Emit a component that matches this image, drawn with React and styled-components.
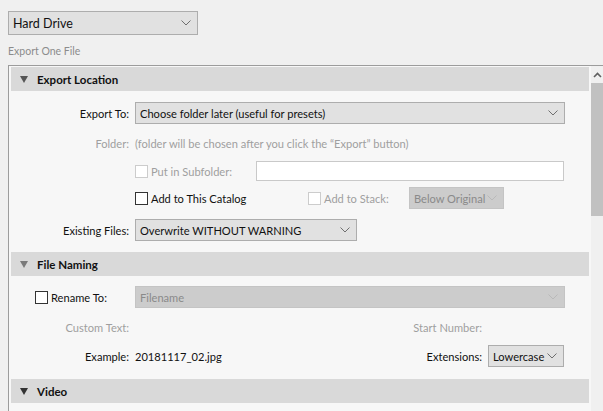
import React from 'react'
import styled, { createGlobalStyle } from 'styled-components'

const GlobalStyle = createGlobalStyle`
    html, body {
        margin: 0;
        padding: 0;
        background: #f0f0f0;
        font-family: Lato, 'Open Sans', sans-serif;
        font-size: 11.1px;
        color: #111;
        overflow: hidden;
    }
`

const Chevron = ({ color = '#6f6f6f' }) => (
    <svg width="10" height="6" viewBox="0 0 10 6">
        <polyline points="0.5,0.5 5,5 9.5,0.5" fill="none" stroke={color} strokeWidth="1" />
    </svg>
)

const Triangle = ({ color }) => (
    <svg width="8" height="7" viewBox="0 0 8 7">
        <polygon points="0,0 8,0 4,7" fill={color} />
    </svg>
)

const Select = ({ value, width, disabled, big }) => (
    <S.Select $width={width} $disabled={disabled} $big={big}>
        <S.Value>{value}</S.Value>
        <Chevron color={disabled ? '#b9b9b9' : '#6f6f6f'} />
    </S.Select>
)

const Check = ({ label, disabled }) => (
    <S.CheckWrap $disabled={disabled}>
        <S.Box $disabled={disabled} />
        {label}
    </S.CheckWrap>
)

const Section = ({ title, tri, children }) => (
    <S.Section>
        <S.Header>
            <Triangle color={tri} />
            <span>{title}</span>
        </S.Header>
        {children}
    </S.Section>
)

const App = () => {
    return (
        <S.Page>
            <GlobalStyle />
            <Select value="Hard Drive" width={190} big />
            <S.Caption>Export One File</S.Caption>
            <S.Panel>
                <S.Content>
                    <Section title="Export Location" tri="#555">
                        <S.Body $pad="11px 25px 11px 0">
                            <S.Row>
                                <S.Label>Export To:</S.Label>
                                <Select value="Choose folder later (useful for presets)" width={430} />
                            </S.Row>
                            <S.Row $mt={8}>
                                <S.Label $disabled>Folder:</S.Label>
                                <S.Muted>(folder will be chosen after you click the “Export” button)</S.Muted>
                            </S.Row>
                            <S.Row $mt={6}>
                                <S.Label />
                                <S.Fixed $width={115}>
                                    <Check label="Put in Subfolder:" disabled />
                                </S.Fixed>
                                <S.Input />
                            </S.Row>
                            <S.Row $mt={5}>
                                <S.Label />
                                <S.Fixed $width={167}>
                                    <Check label="Add to This Catalog" />
                                </S.Fixed>
                                <S.Fixed $width={95}>
                                    <Check label="Add to Stack:" disabled />
                                </S.Fixed>
                                <Select value="Below Original" width={95} disabled />
                            </S.Row>
                            <S.Row $mt={10}>
                                <S.Label>Existing Files:</S.Label>
                                <Select value="Overwrite WITHOUT WARNING" width={222} />
                            </S.Row>
                        </S.Body>
                    </Section>
                    <Section title="File Naming" tri="#7a7a7a">
                        <S.Body $pad="10px 25px 12px 0">
                            <S.Row>
                                <S.Label $left>
                                    <Check label="Rename To:" />
                                </S.Label>
                                <Select value="Filename" width={430} disabled />
                            </S.Row>
                            <S.Row $mt={8}>
                                <S.Label $disabled>Custom Text:</S.Label>
                                <S.Spacer />
                                <S.Label $disabled>Start Number:</S.Label>
                                <S.Fixed $width={76} />
                            </S.Row>
                            <S.Row $mt={7}>
                                <S.Label>Example:</S.Label>
                                <span>20181117_02.jpg</span>
                                <S.Spacer />
                                <S.Label>Extensions:</S.Label>
                                <Select value="Lowercase" width={76} />
                            </S.Row>
                        </S.Body>
                    </Section>
                    <Section title="Video" tri="#333">
                        <S.Body $pad="10px 0" />
                    </Section>
                </S.Content>
                <S.Scrollbar>
                    <S.Arrow>
                        <svg width="9" height="6" viewBox="0 0 9 6">
                            <polyline points="1,5 4.5,1.5 8,5" fill="none" stroke="#606060" strokeWidth="1.6" />
                        </svg>
                    </S.Arrow>
                    <S.Thumb />
                </S.Scrollbar>
            </S.Panel>
        </S.Page>
    )
}

const S = {
    Page: styled.div`
        padding: 11px 0 0 8px;
        height: 411px;
        box-sizing: border-box;
        display: flex;
        flex-direction: column;
        align-items: flex-start;
    `,
    Caption: styled.div`
        margin: 10px 0 0 0;
        height: 13px;
        line-height: 13px;
        font-size: 10.5px;
        color: #8c8c8c;
    `,
    Panel: styled.div`
        margin-top: 7px;
        align-self: stretch;
        flex: 1;
        display: flex;
        border-top: 1px solid #9c9c9c;
        border-left: 1px solid #9c9c9c;
        background: #f7f7f7;
        overflow: hidden;
    `,
    Content: styled.div`
        width: 578px;
        padding: 1px 0 0 2px;
        display: flex;
        flex-direction: column;
    `,
    Section: styled.div`
        display: flex;
        flex-direction: column;
    `,
    Header: styled.div`
        height: 24px;
        background: #d9d9d9;
        display: flex;
        align-items: center;
        gap: 9px;
        padding-left: 9px;
        font-weight: 700;
        font-size: 11.5px;
        color: #111;
    `,
    Body: styled.div`
        padding: ${({ $pad }) => $pad};
        display: flex;
        flex-direction: column;
    `,
    Row: styled.div`
        display: flex;
        align-items: center;
        height: 22px;
        margin-top: ${({ $mt }) => ($mt ? `${$mt}px` : '0')};
        gap: 6px;
    `,
    Label: styled.div`
        width: ${({ $left }) => ($left ? '94px' : 'auto')};
        min-width: ${({ $left }) => ($left ? '94px' : '118px')};
        padding-left: ${({ $left }) => ($left ? '24px' : '0')};
        text-align: right;
        white-space: nowrap;
        color: ${({ $disabled }) => ($disabled ? '#9f9f9f' : '#111')};
        &:empty {
            width: 118px;
        }
    `,
    Muted: styled.span`
        color: #9f9f9f;
        white-space: nowrap;
    `,
    Fixed: styled.div`
        width: ${({ $width }) => $width}px;
        flex-shrink: 0;
    `,
    Spacer: styled.div`
        flex: 1;
    `,
    Select: styled.div`
        box-sizing: border-box;
        width: ${({ $width }) => $width}px;
        height: ${({ $big }) => ($big ? '24px' : '22px')};
        flex-shrink: 0;
        display: flex;
        align-items: center;
        justify-content: space-between;
        padding: 0 6px 0 4px;
        background: ${({ $disabled }) => ($disabled ? '#cccccc' : '#e1e1e1')};
        border: 1px solid ${({ $disabled }) => ($disabled ? '#c4c4c4' : '#adadad')};
        color: ${({ $disabled }) => ($disabled ? '#8a8a8a' : '#111')};
        font-size: ${({ $big }) => ($big ? '12.5px' : '11.1px')};
        white-space: nowrap;
        & svg {
            flex-shrink: 0;
        }
    `,
    Value: styled.span`
        white-space: nowrap;
    `,
    Input: styled.div`
        box-sizing: border-box;
        width: 309px;
        height: 20px;
        background: #fff;
        border: 1px solid #c9c9c9;
    `,
    CheckWrap: styled.div`
        display: flex;
        align-items: center;
        gap: 3px;
        white-space: nowrap;
        color: ${({ $disabled }) => ($disabled ? '#9f9f9f' : '#111')};
    `,
    Box: styled.div`
        box-sizing: border-box;
        width: 13px;
        height: 13px;
        background: #fff;
        border: 1px solid ${({ $disabled }) => ($disabled ? '#cccccc' : '#333')};
    `,
    Scrollbar: styled.div`
        margin-left: 2px;
        width: 17px;
        background: #f0f0f0;
        display: flex;
        flex-direction: column;
        align-items: center;
    `,
    Arrow: styled.div`
        height: 17px;
        display: flex;
        align-items: center;
        justify-content: center;
        width: 100%;
    `,
    Thumb: styled.div`
        width: 100%;
        height: 133px;
        background: #c1c1c1;
    `,
}

export default App
